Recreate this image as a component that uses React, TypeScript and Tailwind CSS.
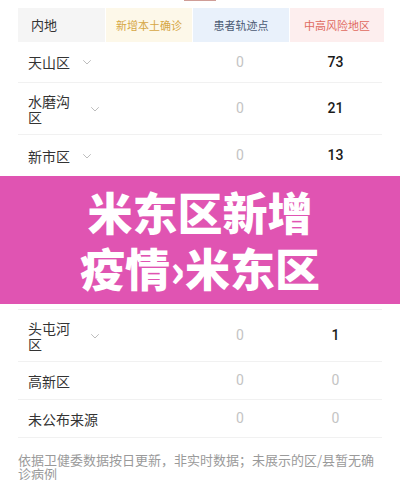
import React from "react";

type Row = {
  name: string;
  patients: number;
  risk: number;
  expandable: boolean;
  height: string;
  border?: boolean;
};

const topRows: Row[] = [
  { name: "天山区", patients: 0, risk: 73, expandable: true, height: "h-[41px]", border: true },
  { name: "水磨沟区", patients: 0, risk: 21, expandable: true, height: "h-[52px]", border: true },
  { name: "新市区", patients: 0, risk: 13, expandable: true, height: "h-[41px]" },
];

const bottomRows: Row[] = [
  { name: "头屯河区", patients: 0, risk: 1, expandable: true, height: "h-[52px]", border: true },
  { name: "高新区", patients: 0, risk: 0, expandable: false, height: "h-[38px]", border: true },
  { name: "未公布来源", patients: 0, risk: 0, expandable: false, height: "h-[38px]", border: true },
];

function Chevron() {
  return (
    <svg width="10" height="6" viewBox="0 0 10 6" fill="none" className="shrink-0">
      <path d="M1.5 1.5l3.5 3.5 3.5-3.5" stroke="#bdbdbd" strokeWidth="1" strokeLinecap="round" strokeLinejoin="round" />
    </svg>
  );
}

function DistrictRow({ row }: { row: Row }) {
  return (
    <div
      className={
        "grid grid-cols-[174px_96px_95px] items-center " +
        row.height +
        (row.border ? " border-b border-[#f1f1f1]" : "")
      }
    >
      <div className="flex items-center gap-[12px] pl-[10px]">
        <span
          className={
            "text-[14px] leading-[16px] text-[#333] " +
            (row.expandable ? "max-w-[50px]" : "")
          }
        >
          {row.name}
        </span>
        {row.expandable ? <Chevron /> : null}
      </div>
      <div className="text-center text-[14px] text-[#c4c4c4] [font-family:Roboto,sans-serif]">
        {row.patients}
      </div>
      <div
        className={
          "text-center text-[14px] [font-family:Roboto,sans-serif] " +
          (row.risk === 0 ? "text-[#c4c4c4]" : "text-[#1a1a1a] font-medium")
        }
      >
        {row.risk}
      </div>
    </div>
  );
}

function TableHeader() {
  return (
    <div className="grid h-[34px] grid-cols-[87px_86px_96px_94px] gap-x-[1px]">
      <div className="flex items-center bg-[#f5f5f5] pl-[13px] text-[13px] text-[#333]">内地</div>
      <div className="flex items-center justify-center bg-[#fdf8e9] text-[11px] text-[#d6a745]">
        新增本土确诊
      </div>
      <div className="flex items-center justify-center bg-[#e9f1fb] text-[11px] text-[#4b5a73]">
        患者轨迹点
      </div>
      <div className="flex items-center justify-center bg-[#fdeeee] text-[11px] text-[#e06a5e]">
        中高风险地区
      </div>
    </div>
  );
}

export default function App() {
  return (
    <div
      className="h-[480px] w-[400px] overflow-hidden bg-white"
      style={{ fontFamily: '"Noto Sans CJK SC", "Noto Sans", sans-serif' }}
    >
      <div className="px-[18px]">
        <div className="ml-[166px] h-[1px] w-[32px] bg-[#cf9d97]" />
        <div className="mt-[7px]">
          <TableHeader />
        </div>
        {topRows.map((row) => (
          <DistrictRow key={row.name} row={row} />
        ))}
      </div>

      <div className="flex h-[128px] flex-col items-center justify-center bg-[#e054b2] text-[45px] font-black leading-[56px] text-white">
        <div>米东区新增</div>
        <div>疫情›米东区</div>
      </div>

      <div className="px-[18px] pt-[5px]">
        <div className="border-t border-[#f1f1f1]">
          {bottomRows.map((row) => (
            <DistrictRow key={row.name} row={row} />
          ))}
        </div>
        <p className="mt-[15px] text-[13px] leading-[14px] text-[#9a9a9a]">
          依据卫健委数据按日更新，非实时数据；未展示的区/县暂无确诊病例
        </p>
      </div>
    </div>
  );
}
